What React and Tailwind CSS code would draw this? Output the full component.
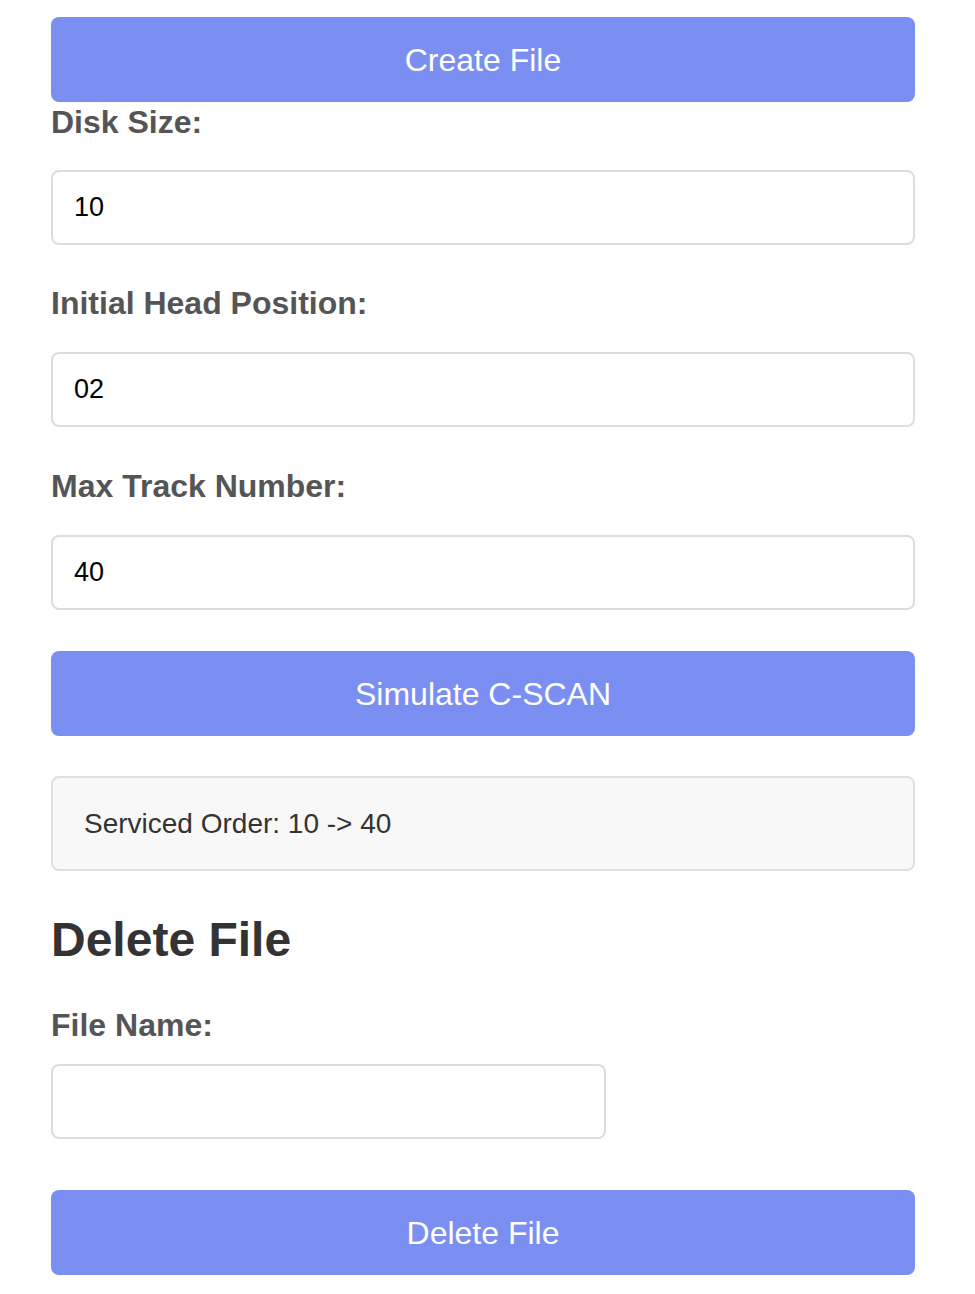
import React from "react";

const font = { fontFamily: '"Liberation Sans", Arial, sans-serif' };

function Btn({ children, className = "" }) {
  return (
    <button
      className={`block h-[85px] w-full rounded-[8px] bg-[#7b8ef2] text-[32px] text-white ${className}`}
    >
      {children}
    </button>
  );
}

function Label({ children, className = "" }) {
  return (
    <label className={`block text-[32px] font-bold leading-[36px] text-[#555555] ${className}`}>
      {children}
    </label>
  );
}

function Field({ value, className = "" }) {
  return (
    <input
      readOnly
      value={value}
      className={`block h-[75px] rounded-[8px] border-2 border-[#dddddd] bg-white px-[21px] text-[27px] text-black outline-none ${className}`}
    />
  );
}

export default function App() {
  return (
    <div className="min-h-[1294px] bg-white" style={font}>
      <div className="ml-[51px] w-[864px] pt-[17px]">
        <Btn>Create File</Btn>
        <Label className="mt-[2px]">Disk Size:</Label>
        <Field value="10" className="mt-[30px] w-full" />
        <Label className="mt-[40px]">Initial Head Position:</Label>
        <Field value="02" className="mt-[31px] w-full" />
        <Label className="mt-[41px]">Max Track Number:</Label>
        <Field value="40" className="mt-[31px] w-full" />
        <Btn className="mt-[41px]">Simulate C-SCAN</Btn>
        <div className="mt-[40px] flex h-[95px] items-center rounded-[8px] border-2 border-[#e0e0e0] bg-[#f8f8f8] pl-[31px] text-[28px] text-[#333333]">
          Serviced Order: 10 -&gt; 40
        </div>
        <h2 className="mt-[41px] text-[48px] font-bold leading-[55px] text-[#333333]">Delete File</h2>
        <Label className="mt-[40px]">File Name:</Label>
        <Field value="" className="mt-[21px] w-[555px]" />
        <Btn className="mt-[51px]">Delete File</Btn>
      </div>
    </div>
  );
}
